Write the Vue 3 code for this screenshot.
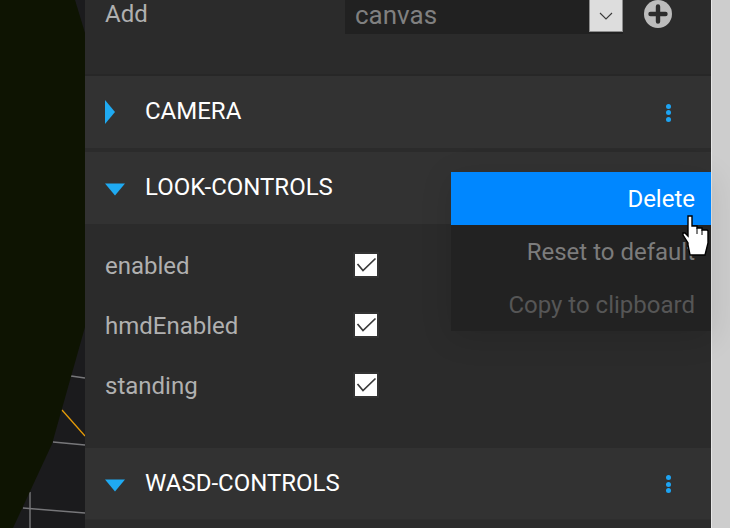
<script setup>
const fields = ['enabled', 'hmdEnabled', 'standing']
const menu = [
  { label: 'Delete', cls: 'active' },
  { label: 'Reset to default', cls: 'mid' },
  { label: 'Copy to clipboard', cls: 'dim' },
]
</script>

<template>
  <div class="app">
    <div class="scene">
      <svg class="scene-art" width="85" height="528" viewBox="0 0 85 528">
        <rect width="85" height="528" fill="#1b1b1d" />
        <g stroke="#77777a" stroke-width="1.4" fill="none">
          <path d="M71 376L85 378" />
          <path d="M53 442L85 445" />
          <path d="M23 508L85 513" />
          <path d="M30 492V528" />
        </g>
        <path d="M62 410L85 436" stroke="#e79c08" stroke-width="1.3" fill="none" />
        <path d="M0 0H75L85 33V327L52 444L13 528H0Z" fill="#0e1402" />
      </svg>
    </div>

    <div class="panel">
      <div class="add-row">
        <span class="label">Add</span>
        <div class="select">
          <span class="select-text">canvas</span>
          <span class="select-btn">
            <svg width="14" height="8" viewBox="0 0 14 8"><path d="M1 1L7 7L13 1" fill="none" stroke="#3a3a3a" stroke-width="1.1" /></svg>
          </span>
        </div>
        <svg class="plus" width="28" height="28" viewBox="0 0 28 28">
          <circle cx="14" cy="14" r="14" fill="#bcbcbc" />
          <path d="M14 6.5V21.5M6.5 14H21.5" stroke="#2b2b2b" stroke-width="4.4" stroke-linecap="round" />
        </svg>
      </div>

      <div class="head camera">
        <svg class="tri" width="20" height="24" viewBox="0 0 20 24"><path d="M0 0L10 12L0 24Z" fill="#1faaf2" /></svg>
        <span class="title">CAMERA</span>
        <span class="dots"><i></i><i></i><i></i></span>
      </div>

      <div class="head look">
        <svg class="tri" width="20" height="24" viewBox="0 0 20 24"><path d="M0 7.5H20L10 19.5Z" fill="#1faaf2" /></svg>
        <span class="title">LOOK-CONTROLS</span>
      </div>

      <div class="fields">
        <div v-for="f in fields" :key="f" class="field">
          <span class="label">{{ f }}</span>
          <span class="check">
            <svg width="22" height="22" viewBox="0 0 22 22"><path d="M2.5 10L8 16.5L20.5 4.5" fill="none" stroke="#3a3a3a" stroke-width="1.7" /></svg>
          </span>
        </div>
      </div>

      <div class="head wasd">
        <svg class="tri" width="20" height="24" viewBox="0 0 20 24"><path d="M0 7.5H20L10 19.5Z" fill="#1faaf2" /></svg>
        <span class="title">WASD-CONTROLS</span>
        <span class="dots"><i></i><i></i><i></i></span>
      </div>

      <div class="menu">
        <div v-for="m in menu" :key="m.label" class="item" :class="m.cls">{{ m.label }}</div>
      </div>

      <svg class="cursor" width="28" height="42" viewBox="0 0 28 42">
        <path d="M6 1H10V11H15V13H20V15H25L26 16V28L23 40H8L6 30V28L1 20V18H3L6 21Z" fill="#fff" stroke="#000" stroke-width="1.4" stroke-linejoin="miter" />
        <path d="M15 13V19M20 15V20" fill="none" stroke="#000" stroke-width="1" />
      </svg>
    </div>

    <div class="rail"></div>
  </div>
</template>

<style scoped>
.app {
  width: 730px;
  height: 528px;
  display: flex;
  overflow: hidden;
  background: #cdcdcd;
  font-family: Roboto, "Liberation Sans", sans-serif;
}
.scene {
  width: 85px;
  flex: none;
}
.scene-art {
  display: block;
}
.panel {
  position: relative;
  width: 626px;
  flex: none;
  background: #2b2b2b;
  border-right: 1px solid #e6e6e6;
  box-sizing: content-box;
}
.rail {
  flex: 1;
  background: #cdcdcd;
}
.add-row {
  height: 74px;
  display: flex;
  align-items: flex-start;
  padding-left: 20px;
  background: #2b2b2b;
  border-bottom: 2px solid #272727;
  box-sizing: content-box;
}
.label {
  font-size: 24px;
  line-height: 28px;
  color: #b0b0b0;
}
.add-row .label {
  width: 240px;
  flex: none;
}
.select {
  width: 278px;
  height: 34px;
  display: flex;
  justify-content: space-between;
  background: #212121;
}
.select-text {
  padding: 1px 0 0 10px;
  font-size: 26px;
  line-height: 28px;
  color: #808080;
}
.select-btn {
  width: 34px;
  height: 32px;
  display: flex;
  align-items: center;
  justify-content: center;
  background: #dddddd;
  border-right: 1px solid #8d8d8d;
  border-bottom: 1px solid #8d8d8d;
  border-left: 1px solid #8d8d8d;
  box-sizing: border-box;
}
.plus {
  margin-left: 21px;
}
.head {
  height: 72px;
  display: flex;
  align-items: center;
  padding: 0 40px 0 20px;
  background: #323232;
  box-sizing: border-box;
}
.camera {
  margin-bottom: 4px;
}
.look {
  margin-bottom: 1px;
}
.tri {
  width: 20px;
  margin-right: 20px;
  flex: none;
}
.title {
  flex: 1;
  font-size: 24px;
  line-height: 26px;
  padding-bottom: 2px;
  color: #ffffff;
}
.dots {
  display: flex;
  flex-direction: column;
  gap: 1.5px;
  padding-top: 1px;
}
.dots i {
  width: 5px;
  height: 5px;
  border-radius: 50%;
  background: #1da4f3;
}
.fields {
  padding: 10px 0 33px 20px;
}
.field {
  height: 60px;
  display: flex;
  align-items: center;
}
.field .label {
  width: 250px;
  flex: none;
  padding-top: 2px;
}
.check {
  width: 22px;
  height: 22px;
  background: #ffffff;
  box-shadow: 0 0 0 2px #333333;
}
.check svg {
  display: block;
}
.wasd {
  border-bottom: 1px solid #2e2e2e;
}
.menu {
  position: absolute;
  top: 172px;
  right: 0;
  width: 260px;
  background: #222222;
  box-shadow: 0 6px 30px rgba(0, 0, 0, 0.12);
}
.item {
  height: 53px;
  padding: 1px 16px 0 0;
  box-sizing: border-box;
  font-size: 24px;
  line-height: 53px;
  text-align: right;
}
.active {
  background: #0087ff;
  color: #ffffff;
}
.mid {
  color: #7c7c7c;
}
.dim {
  color: #565656;
}
.cursor {
  position: absolute;
  left: 597px;
  top: 215px;
}
</style>
